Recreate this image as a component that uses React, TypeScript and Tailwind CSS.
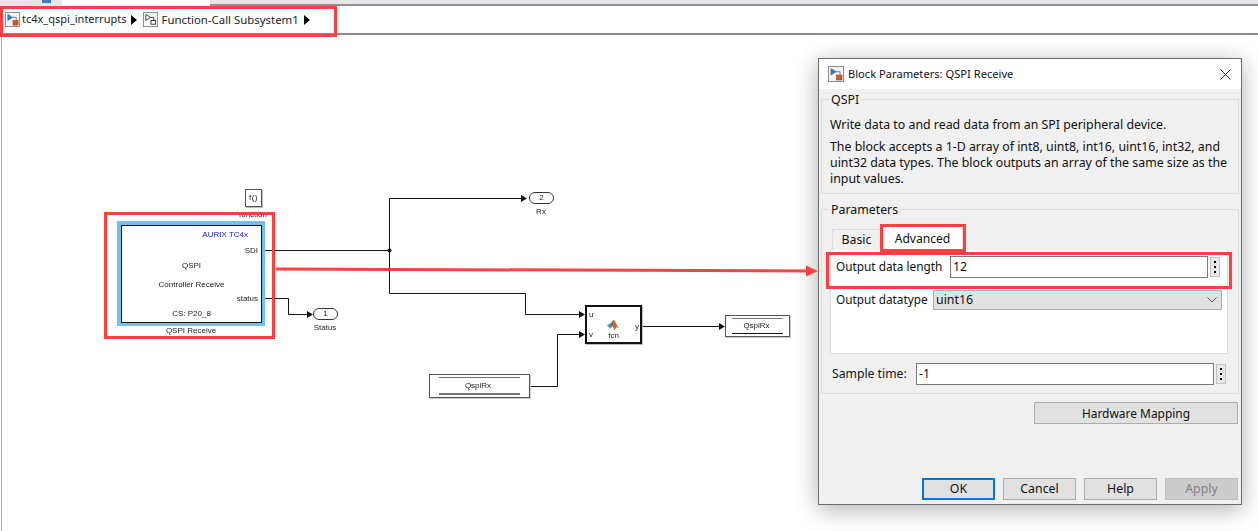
import React from "react";

const FONT = { fontFamily: '"Noto Sans", sans-serif' };

function ModelIcon({ cls }: { cls: string }) {
  return (
    <svg viewBox="0 0 16 16" className={cls}>
      <rect x="0.5" y="0.5" width="15" height="15" fill="#f4f4f4" stroke="#8a8a8a" />
      <path d="M3 2.5 L3 9 L8 5.75 Z" fill="#2f7fd0" stroke="#1f5fa8" strokeWidth="0.6" />
      <path d="M8 5.75 H12 V9" fill="none" stroke="#555" strokeWidth="0.8" />
      <rect x="8.5" y="9" width="5.5" height="5" fill="#d9541e" stroke="#9a3a10" strokeWidth="0.5" />
    </svg>
  );
}

function SubsystemIcon({ cls }: { cls: string }) {
  return (
    <svg viewBox="0 0 16 16" className={cls}>
      <rect x="0.5" y="0.5" width="15" height="15" fill="#f8f8f8" stroke="#8a8a8a" />
      <path d="M3 2.5 L3 9 L8 5.75 Z" fill="#fff" stroke="#222" strokeWidth="0.9" />
      <path d="M8 5.75 H11.5 V9" fill="none" stroke="#222" strokeWidth="0.9" />
      <rect x="8.5" y="9" width="5" height="4" fill="#fff" stroke="#222" strokeWidth="0.9" />
    </svg>
  );
}

function Crumb() {
  return <span className="ml-[5px] mr-[6px] h-0 w-0 border-y-[5px] border-l-[6px] border-y-transparent border-l-black" />;
}

function Dots({ cls }: { cls: string }) {
  return (
    <div className={`flex flex-col items-center justify-center gap-[3px] border border-[#c4c4c4] bg-[#e8e8e8] ${cls}`}>
      <span className="h-[2px] w-[2px] bg-black" />
      <span className="h-[2px] w-[2px] bg-black" />
      <span className="h-[2px] w-[2px] bg-black" />
    </div>
  );
}

function Btn({ label, cls }: { label: string; cls: string }) {
  return <div className={`flex h-[22px] w-[73px] items-center justify-center pt-px ${cls}`}>{label}</div>;
}

function Dialog() {
  return (
    <div
      style={FONT}
      className="absolute left-[818px] top-[58px] flex h-[447px] w-[424px] flex-col border border-[#6e6e6e] bg-[#f0f0f0] text-[12.35px] text-[#111] shadow-[0_4px_22px_rgba(0,0,0,0.32)]"
    >
      <div className="flex h-[30px] items-center bg-white pl-[9px] pr-[10px]">
        <ModelIcon cls="h-[16px] w-[16px]" />
        <span className="ml-[4px] text-[11.15px]">Block Parameters: QSPI Receive</span>
        <svg viewBox="0 0 12 12" className="ml-auto h-[11px] w-[11px]">
          <path d="M0.5 0.5 L11.5 11.5 M11.5 0.5 L0.5 11.5" stroke="#222" strokeWidth="1" fill="none" />
        </svg>
      </div>

      <div className="relative ml-[2px] mt-[10px] h-[95px] w-[418px] border border-[#dcdcdc] pl-[8px] pt-[17px]">
        <span className="absolute left-[7px] top-[-8px] bg-[#f0f0f0] px-[2px] leading-[16px]">QSPI</span>
        <p className="leading-[16px]">Write data to and read data from an SPI peripheral device.</p>
        <p className="mt-[6px] w-[404px] leading-[16px]">
          The block accepts a 1-D array of int8, uint8, int16, uint16, int32, and uint32 data types. The block outputs an array of the same size as the input values.
        </p>
      </div>

      <div className="relative ml-[2px] mt-[15px] h-[185px] w-[418px] border border-[#dcdcdc] pl-[8px] pt-[15px]">
        <span className="absolute left-[7px] top-[-8px] bg-[#f0f0f0] px-[2px] leading-[16px]">Parameters</span>
        <div className="flex h-[25px] items-end pl-[2px]">
          <div className="flex h-[21px] w-[49px] items-center justify-center border border-b-0 border-[#dcdcdc] bg-[#f0f0f0] pt-px">Basic</div>
          <div className="ml-[1px] flex h-[24px] w-[81px] items-center justify-center border border-b-0 border-[#dcdcdc] bg-white pt-px text-[12.1px]">Advanced</div>
        </div>
        <div className="h-[104px] w-[398px] border border-t-0 border-[#dcdcdc] bg-white pl-[5px] pr-[5px]">
          <div className="flex h-[28px] items-start pt-[6px]">
            <span className="flex h-[22px] w-[114px] items-center whitespace-nowrap text-[11.8px]">Output data length</span>
            <div className="flex h-[22px] w-[258px] items-center border border-[#7a7a7a] bg-white pl-[2px]">12</div>
            <Dots cls="ml-[2px] mt-px h-[20px] w-[10px]" />
          </div>
          <div className="mt-[12px] flex h-[20px] items-center">
            <span className="w-[97px] whitespace-nowrap text-[11.8px]">Output datatype</span>
            <div className="flex h-[20px] w-[289px] items-center justify-between border border-[#adadad] bg-[#e1e1e1] pl-[2px] pr-[4px]">
              uint16
              <svg viewBox="0 0 10 6" className="h-[6px] w-[10px]">
                <path d="M0.5 0.5 L5 5 L9.5 0.5" stroke="#555" strokeWidth="1" fill="none" />
              </svg>
            </div>
          </div>
        </div>
        <div className="mt-[9px] flex h-[22px] items-center pl-[2px]">
          <span className="w-[84px] text-[12.2px]">Sample time:</span>
          <div className="flex h-[22px] w-[298px] items-center border border-[#7a7a7a] bg-white pl-[2px]">-1</div>
          <Dots cls="ml-[2px] h-[20px] w-[10px]" />
        </div>
      </div>

      <div className="mr-[3px] mt-[8px] flex justify-end">
        <div className="flex h-[22px] w-[204px] items-center justify-center border border-[#adadad] bg-[#e1e1e1] pt-px text-[11.95px]">Hardware Mapping</div>
      </div>

      <div className="mb-[4px] mr-[3px] mt-auto flex justify-end gap-[8px]">
        <Btn label="OK" cls="border-2 border-[#0078d7] bg-[#e1e1e1]" />
        <Btn label="Cancel" cls="border border-[#adadad] bg-[#e1e1e1]" />
        <Btn label="Help" cls="border border-[#adadad] bg-[#e1e1e1]" />
        <Btn label="Apply" cls="border border-[#bfbfbf] bg-[#cccccc] text-[#7f7f7f]" />
      </div>
    </div>
  );
}

function Wires() {
  const arrows = [
    "M527 198.5 l-6 -3.5 v7 z",
    "M585 314.5 l-6 -3.5 v7 z",
    "M585 334.5 l-6 -3.5 v7 z",
    "M725 326.5 l-6 -3.5 v7 z",
    "M313 314.5 l-6 -3.5 v7 z",
  ];
  return (
    <svg viewBox="0 0 1258 531" className="absolute left-0 top-0 h-[531px] w-[1258px]">
      <g fill="none" stroke="#111" strokeWidth="1">
        <path d="M262 250.5 H389.5" />
        <path d="M389.5 250.5 V198.5 H523" />
        <path d="M389.5 250.5 V293.5 H525.5 V314.5 H581" />
        <path d="M262 298.5 H288.5 V314.5 H309" />
        <path d="M530 386.5 H557.5 V334.5 H581" />
        <path d="M642 326.5 H721" />
      </g>
      {arrows.map((d) => (
        <path key={d} d={d} fill="#111" />
      ))}
      <circle cx="389.5" cy="250.5" r="2" fill="#111" />
    </svg>
  );
}

function MatlabIcon() {
  return (
    <svg viewBox="0 0 16 14" className="absolute left-[20px] top-[11px] h-[13px] w-[13px]">
      <path d="M0 8 L5 5 L8 1 L7 9 L4 12 Z" fill="#3d8fc9" />
      <path d="M8 1 C10 2 12 8 15 12 L12 10 L9 14 L7 9 Z" fill="#d2622a" />
      <path d="M8 1 C7 4 6 5 5 6 L7 9 Z" fill="#a8481c" />
    </svg>
  );
}

function Diagram() {
  return (
    <div className="absolute inset-0 text-[8px] leading-[10px] text-[#222] blur-[0.3px]" style={{ fontFamily: '"Liberation Sans", sans-serif' }}>
      <Wires />

      <div className="absolute left-[245px] top-[189px] flex h-[18px] w-[17px] items-center justify-center border border-[#555] bg-white shadow-[1px_1px_0_#bbb] tracking-[0.5px]">f()</div>
      <span className="absolute left-[233px] top-[210px] w-[40px] text-center">function</span>

      <div className="absolute left-[117px] top-[221px] h-[105px] w-[148px] bg-[#70c0f4] p-[4px]">
        <div className="relative h-[98px] w-[141px] border border-[#111] bg-white">
          <span className="absolute right-[13px] top-[4px] text-[#2222dd]">AURIX TC4x</span>
          <span className="absolute right-[3px] top-[20px]">SDI</span>
          <span className="absolute left-0 top-[35px] w-full text-center">QSPI</span>
          <span className="absolute left-0 top-[54px] w-full text-center">Controller Receive</span>
          <span className="absolute right-[3px] top-[68px]">status</span>
          <span className="absolute left-0 top-[83px] w-full text-center">CS: P20_8</span>
        </div>
      </div>
      <span className="absolute left-[141px] top-[326px] w-[100px] text-center">QSPI Receive</span>

      <div className="absolute left-[313px] top-[308px] flex h-[12px] w-[25px] items-center justify-center rounded-[6px] border border-[#333] bg-white">1</div>
      <span className="absolute left-[305px] top-[323px] w-[40px] text-center">Status</span>

      <div className="absolute left-[529px] top-[192px] flex h-[12px] w-[25px] items-center justify-center rounded-[6px] border border-[#333] bg-white">2</div>
      <span className="absolute left-[521px] top-[207px] w-[40px] text-center">Rx</span>

      <div className="absolute left-[585px] top-[305px] h-[39px] w-[57px] border-2 border-[#111] bg-white shadow-[1px_1px_0_#bbb]">
        <span className="absolute left-[2px] top-[3px]">u</span>
        <span className="absolute left-[2px] top-[23px]">v</span>
        <span className="absolute right-[1px] top-[15px]">y</span>
        <MatlabIcon />
        <span className="absolute left-0 top-[24px] w-full text-center">fcn</span>
      </div>

      <div className="absolute left-[725px] top-[315px] flex h-[22px] w-[65px] flex-col justify-between border border-[#555] bg-white px-[6px] py-[2px] shadow-[1px_1px_0_#ccc]">
        <div className="h-px bg-[#777]" />
        <span className="pr-[2px] text-center">QspiRx</span>
        <div className="h-px bg-[#111]" />
      </div>

      <div className="absolute left-[429px] top-[374px] flex h-[24px] w-[101px] flex-col justify-between border border-[#555] bg-white px-[9px] py-[2px] shadow-[1px_1px_0_#ccc]">
        <div className="h-px bg-[#777]" />
        <span className="pr-[3px] text-center">QspiRx</span>
        <div className="h-[2px] bg-[#777]" />
      </div>
    </div>
  );
}

export default function App() {
  return (
    <div className="relative h-[531px] w-[1258px] overflow-hidden bg-white" style={FONT}>
      <div className="flex h-[6px] items-start bg-[#e6e6e6]">
        <div className="ml-[42px] h-[3px] w-[9px] bg-[#4a78b0]" />
        <div className="ml-[11px] h-[6px] w-[148px] bg-white" />
        <div className="mt-[4px] h-[2px] flex-1 bg-[#8f9097]" />
      </div>
      <div className="flex h-[29px] items-center border-b-2 border-[#888c96] bg-white pl-[5px] text-[#222]">
        <ModelIcon cls="h-[15px] w-[15px]" />
        <span className="ml-[2px] text-[11px]">tc4x_qspi_interrupts</span>
        <Crumb />
        <SubsystemIcon cls="h-[15px] w-[15px]" />
        <span className="ml-[3px] text-[11.4px]">Function-Call Subsystem1</span>
        <Crumb />
      </div>
      <div className="absolute bottom-0 left-0 top-[35px] w-[2px] border-r border-[#b0b0b0]" />

      <Diagram />
      <Dialog />

      {/* red annotations */}
      <div className="absolute left-0 top-[6px] h-[31px] w-[337px] border-[3px] border-[#ff4040]" />
      <div className="absolute left-[104px] top-[212px] h-[127px] w-[171px] border-[3px] border-[#ff4040]" />
      <div className="absolute left-[880px] top-[224px] h-[28px] w-[86px] border-[3px] border-[#ff4040]" />
      <div className="absolute left-[826px] top-[252px] h-[37px] w-[406px] border-[3px] border-[#ff4040]" />
      <svg viewBox="0 0 1258 531" className="absolute left-0 top-0 h-[531px] w-[1258px]">
        <path d="M276 269 L808 271" stroke="#ff4040" strokeWidth="3" fill="none" />
        <path d="M818 271 L806 265.5 V276.5 Z" fill="#ff4040" />
      </svg>
    </div>
  );
}
